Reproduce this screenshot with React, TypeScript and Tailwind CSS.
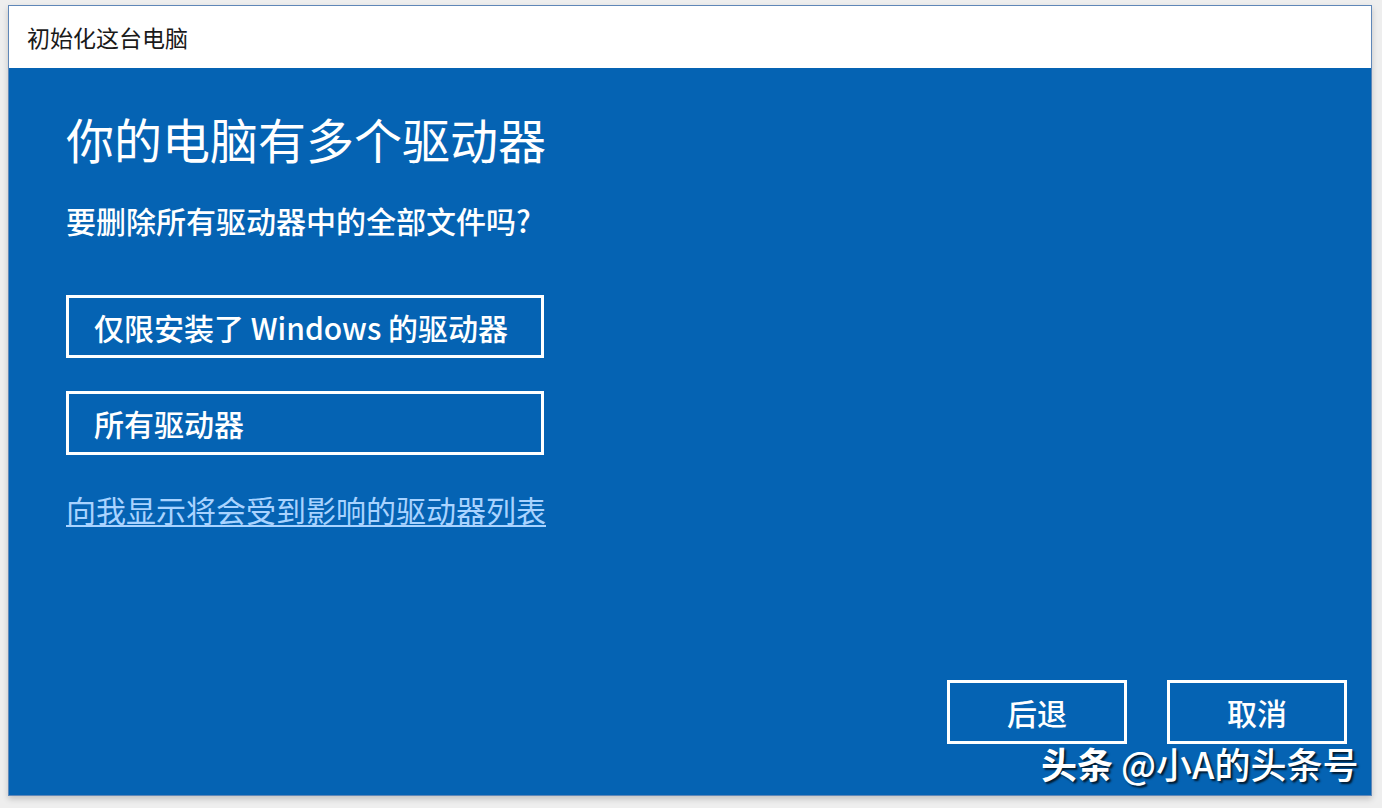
import React from 'react'

const cjk = { fontFamily: '"Noto Sans CJK SC", "Noto Sans", sans-serif' }

export default function App() {
    return (
        <div
            className="relative w-[1382px] h-[808px] bg-[#eeeeee] pt-[5px] pl-[8px]"
            style={cjk}>
            {/* Window */}
            <div className="w-[1364px] h-[791px] flex flex-col border border-[#5f87b8] shadow-[0_3px_6px_rgba(0,0,0,0.18)]">
                {/* Title bar */}
                <div className="h-[62px] bg-white flex items-center pl-[18px] shrink-0">
                    <span className="text-[23px] leading-none text-[#1a1a1a]">
                        初始化这台电脑
                    </span>
                </div>

                {/* Body */}
                <div className="flex-1 bg-[#0563b3] flex flex-col pl-[57px] pr-[24px] pb-[51px]">
                    <h1 className="mt-[46px] text-[48px] leading-[48px] text-white font-normal">
                        你的电脑有多个驱动器
                    </h1>
                    <p className="mt-[43px] text-[30px] leading-[31px] text-white font-medium">
                        要删除所有驱动器中的全部文件吗?
                    </p>

                    <div className="mt-[59px] flex flex-col gap-[33px]">
                        <button className="w-[478px] h-[63px] border-[3px] border-white text-left pl-[25px] text-[30px] leading-none text-white font-medium">
                            仅限安装了 Windows 的驱动器
                        </button>
                        <button className="w-[478px] h-[64px] border-[3px] border-white text-left pl-[25px] text-[30px] leading-none text-white font-medium">
                            所有驱动器
                        </button>
                    </div>

                    <a className="mt-[38px] w-fit text-[30px] leading-[32px] text-[#a9d3ff] underline underline-offset-[3px] decoration-[2px]">
                        向我显示将会受到影响的驱动器列表
                    </a>

                    <div className="mt-auto flex justify-end gap-[40px]">
                        <button className="w-[180px] h-[64px] border-[3px] border-white text-[30px] leading-none text-white font-medium">
                            后退
                        </button>
                        <button className="w-[180px] h-[64px] border-[3px] border-white text-[30px] leading-none text-white font-medium">
                            取消
                        </button>
                    </div>
                </div>
            </div>

            {/* Watermark */}
            <div className="absolute left-[1041px] top-[742px] text-[36px] leading-[43px] text-white whitespace-nowrap [text-shadow:2px_2px_2px_rgba(0,0,0,0.75)]">
                <span className="font-bold">头条</span>
                <span className="font-medium"> @小A的头条号</span>
            </div>
        </div>
    )
}
